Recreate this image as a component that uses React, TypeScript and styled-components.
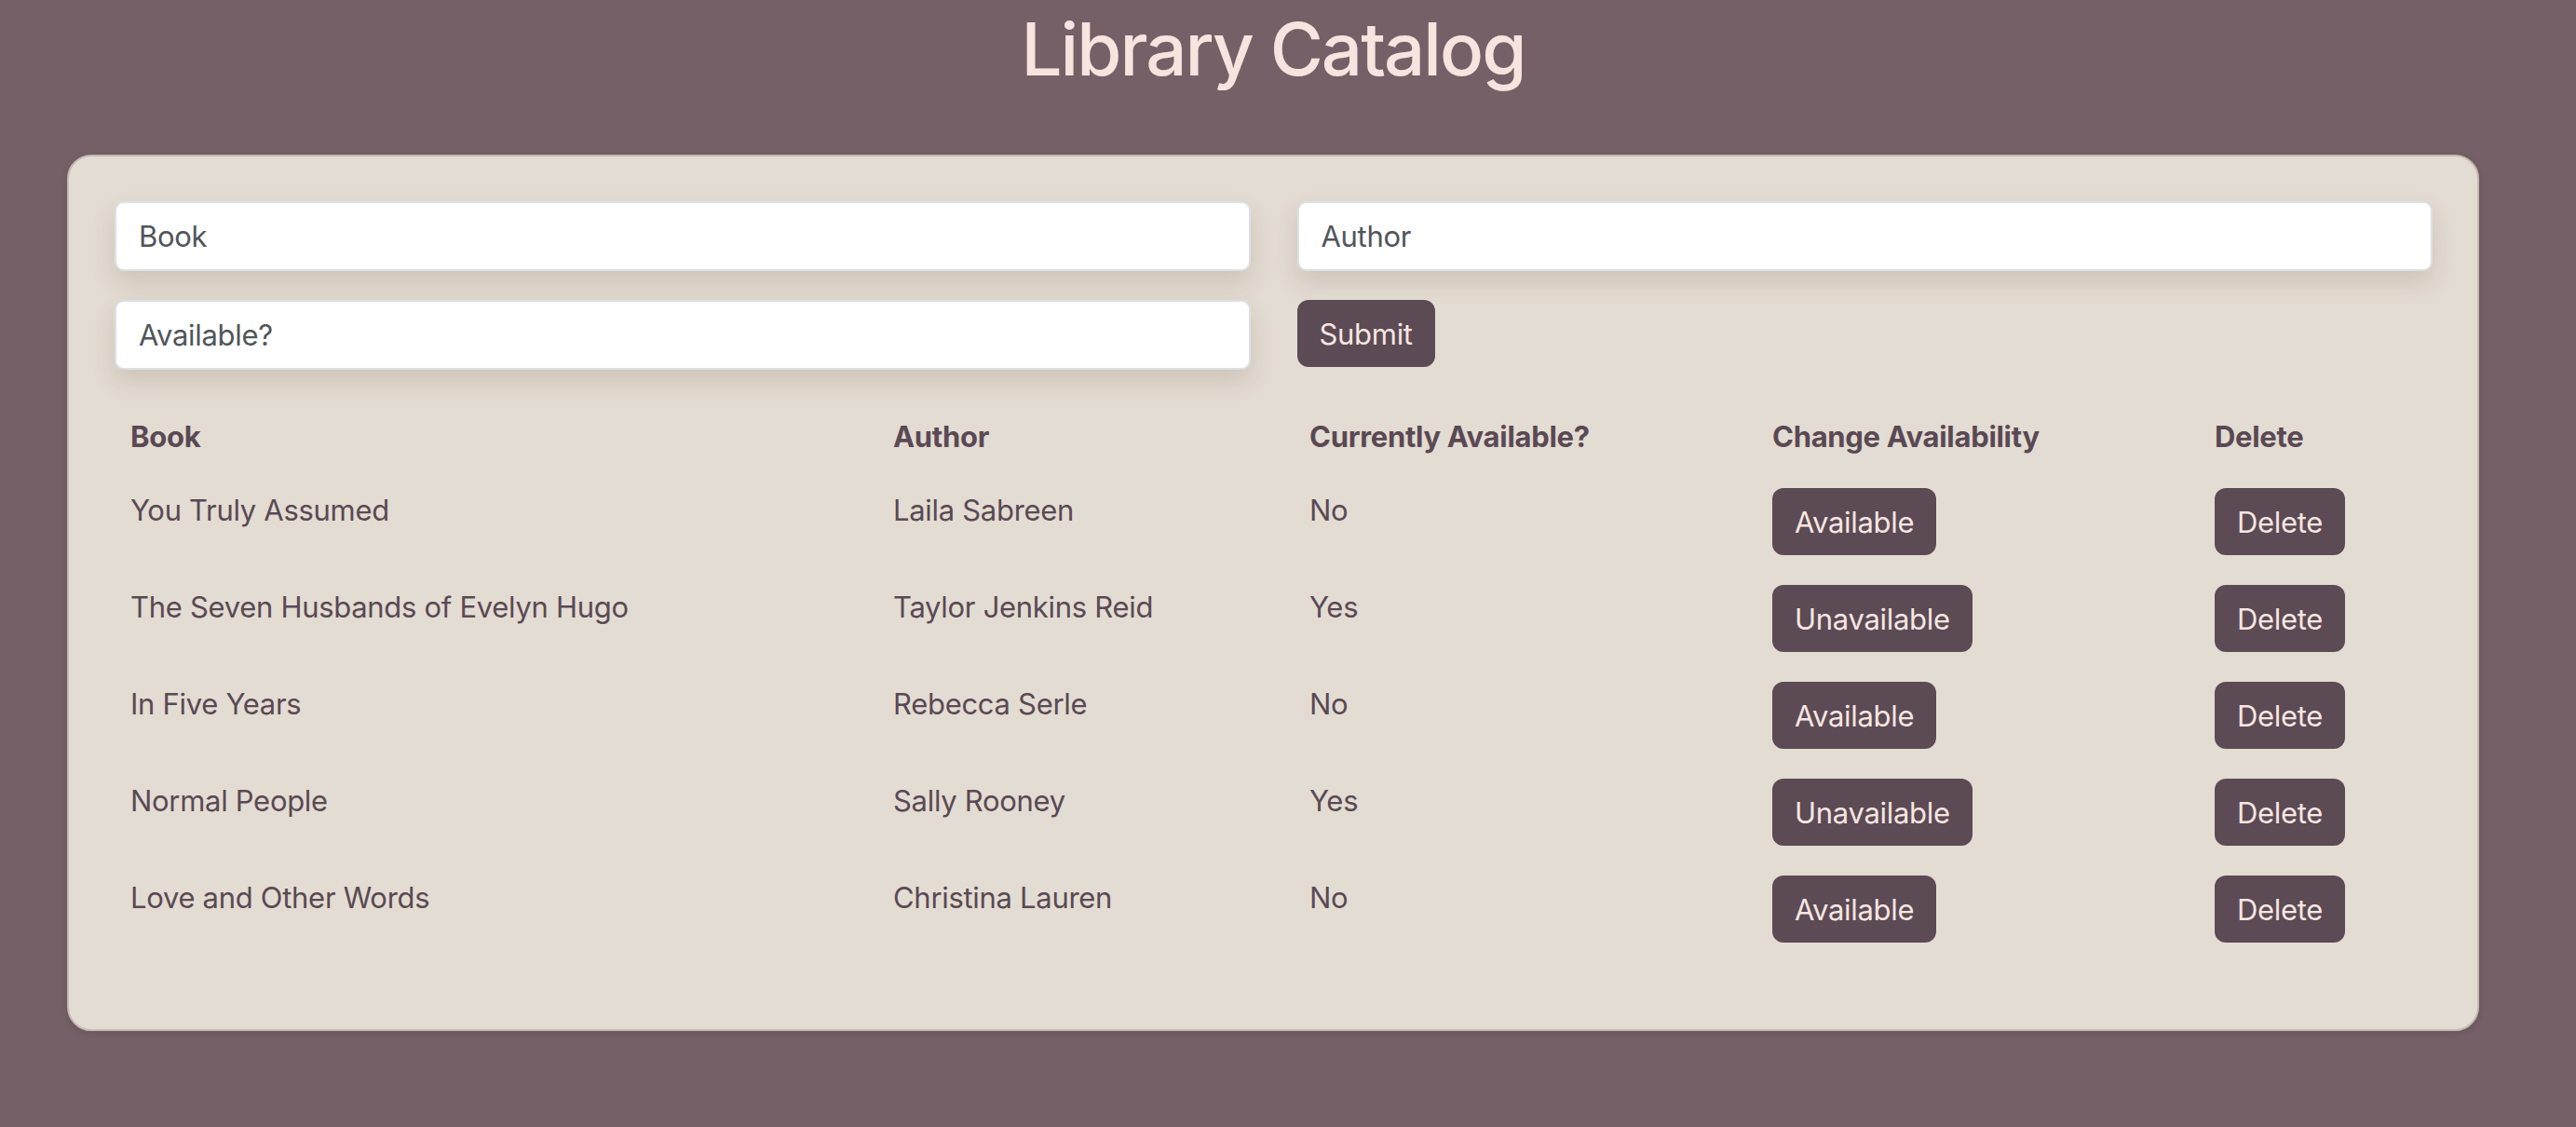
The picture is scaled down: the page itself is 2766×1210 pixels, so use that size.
import React from "react";
import styled, { createGlobalStyle } from "styled-components";

const GlobalStyle = createGlobalStyle`
  html, body {
    margin: 0;
    padding: 0;
    background: #766068;
  }
  body {
    font-family: Inter, "Noto Sans", "Liberation Sans", sans-serif;
    min-height: 1210px;
  }
  * { box-sizing: border-box; }
`;

const Page = styled.div`
  padding: 6px 104px 0 72px;
  min-height: 1210px;
  background: #766068;
`;

const Title = styled.h1`
  margin: 0 0 66px;
  text-align: center;
  font-size: 78px;
  line-height: 94px;
  font-weight: 500;
  letter-spacing: -2px;
  color: #f7e4de;
`;

const Card = styled.div`
  background: #e3dcd2;
  border: 2px solid #c3bbb3;
  border-radius: 26px;
  box-shadow: 0 2px 6px rgba(40, 20, 30, 0.18);
  padding: 48px 48px 62px 49px;
`;

const Form = styled.form`
  display: grid;
  grid-template-columns: 1fr 1fr;
  column-gap: 50px;
  row-gap: 31px;
  align-items: start;
`;

const Input = styled.input`
  height: 75px;
  width: 100%;
  border: 2px solid #dde0e5;
  border-radius: 10px;
  background: #ffffff;
  padding: 0 24px;
  font-family: inherit;
  font-size: 31px;
  letter-spacing: -0.3px;
  color: #50555b;
  box-shadow: 0 12px 26px rgba(90, 70, 55, 0.16);
  outline: none;
  &::placeholder { color: #50555b; opacity: 1; }
`;

const Button = styled.button`
  justify-self: start;
  height: 72px;
  padding: 0 24px;
  border: none;
  border-radius: 12px;
  background: #5c4a55;
  color: #f7e6e0;
  font-family: inherit;
  font-size: 31px;
  font-weight: 400;
  letter-spacing: -0.3px;
  cursor: pointer;
`;

const Table = styled.div`
  margin-top: 52px;
`;

const Row = styled.div<{ $head?: boolean }>`
  display: grid;
  grid-template-columns: 819px 447px 497px 475px 1fr;
  align-items: start;
  height: ${(p) => (p.$head ? "74px" : "104px")};
`;

const HeadCell = styled.div`
  padding: 1px 0 0 17px;
  font-size: 31px;
  line-height: 37.5px;
  font-weight: 700;
  letter-spacing: -0.3px;
  color: #5a4954;
`;

const Cell = styled.div`
  padding: 6px 0 0 17px;
  font-size: 31px;
  line-height: 37.5px;
  letter-spacing: -0.3px;
  color: #5a4954;
`;

const ButtonCell = styled.div`
  padding: 1px 0 0 17px;
`;

const books = [
  { title: "You Truly Assumed", author: "Laila Sabreen", available: false },
  { title: "The Seven Husbands of Evelyn Hugo", author: "Taylor Jenkins Reid", available: true },
  { title: "In Five Years", author: "Rebecca Serle", available: false },
  { title: "Normal People", author: "Sally Rooney", available: true },
  { title: "Love and Other Words", author: "Christina Lauren", available: false },
];

export default function App() {
  return (
    <>
      <GlobalStyle />
      <Page>
        <Title>Library Catalog</Title>
        <Card>
          <Form onSubmit={(e) => e.preventDefault()}>
            <Input placeholder="Book" />
            <Input placeholder="Author" />
            <Input placeholder="Available?" />
            <Button type="submit">Submit</Button>
          </Form>
          <Table>
            <Row $head>
              <HeadCell>Book</HeadCell>
              <HeadCell>Author</HeadCell>
              <HeadCell>Currently Available?</HeadCell>
              <HeadCell>Change Availability</HeadCell>
              <HeadCell>Delete</HeadCell>
            </Row>
            {books.map((b) => (
              <Row key={b.title}>
                <Cell>{b.title}</Cell>
                <Cell>{b.author}</Cell>
                <Cell>{b.available ? "Yes" : "No"}</Cell>
                <ButtonCell>
                  <Button>{b.available ? "Unavailable" : "Available"}</Button>
                </ButtonCell>
                <ButtonCell>
                  <Button>Delete</Button>
                </ButtonCell>
              </Row>
            ))}
          </Table>
        </Card>
      </Page>
    </>
  );
}
